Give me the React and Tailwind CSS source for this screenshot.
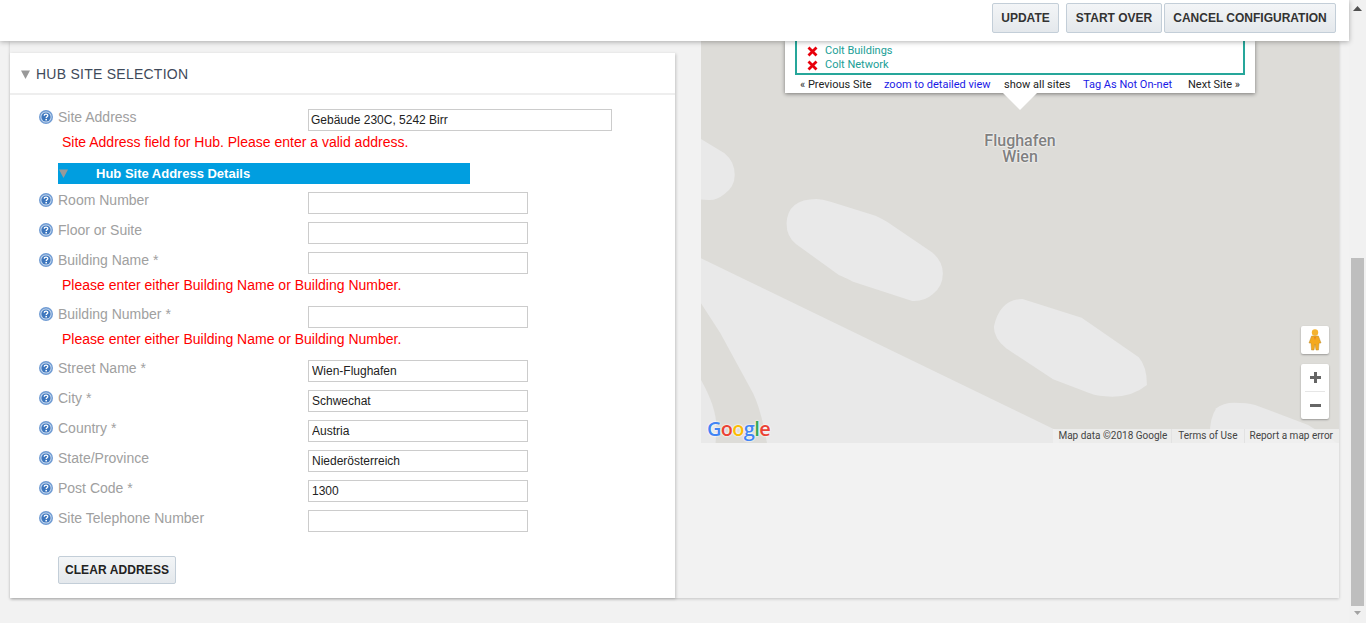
import React from 'react';

const sans = "font-['Liberation_Sans',Arial,sans-serif]";

function HelpIcon() {
  return (
    <svg width="14" height="14" viewBox="0 0 14 14" className="shrink-0">
      <circle cx="7" cy="7" r="7" fill="#6f9bd3" />
      <circle cx="7" cy="7" r="5.6" fill="#c9daef" />
      <circle cx="7" cy="7" r="4.6" fill="#3d76bd" />
      <path d="M5.2 5.7c0-2.2 3.6-2.2 3.6-.1 0 1.3-1.6 1.2-1.6 2.5" fill="none" stroke="#fff" strokeWidth="1.3" />
      <rect x="6.4" y="8.9" width="1.6" height="1.5" fill="#fff" />
    </svg>
  );
}

function Triangle({ className }) {
  return (
    <svg width="9" height="9" viewBox="0 0 9 9" className={className}>
      <path d="M0 0.5H9L4.5 9Z" fill="#999" />
    </svg>
  );
}

function Field({ label, value, error, wide }) {
  return (
    <>
      <div className="flex h-[22px] items-start pl-[29px]">
        <div className="flex w-[269px] items-center gap-[5px] pt-[1px]">
          <HelpIcon />
          <span className="text-[14px] leading-[14px] text-[#a0a0a0]">{label}</span>
        </div>
        <input
          readOnly
          value={value || ''}
          className={`h-[22px] border border-[#ccc] bg-white text-[12px] text-[#222] outline-none ${wide ? 'w-[304px] px-[2px]' : 'w-[220px] px-[3px]'}`}
        />
      </div>
      {error ? (
        <div className="h-[32px] pl-[52px] pt-[3px] text-[14px] leading-[16px] text-[#f00]">{error}</div>
      ) : (
        <div className="h-[8px]" />
      )}
    </>
  );
}

function HubPanel() {
  return (
    <div className="h-[545px] w-[665px] bg-white shadow-[1px_1px_3px_rgba(0,0,0,0.2)]">
      <div className="flex h-[42px] items-center gap-[6px] border-b-2 border-[#eee] pl-[11px] pt-[3px]">
        <Triangle />
        <span className="text-[14px] tracking-[0.25px] text-[#3f4a5a]">HUB SITE SELECTION</span>
      </div>
      <div className="pt-[14px]">
        <Field wide label="Site Address" value="Gebäude 230C, 5242 Birr" error="Site Address field for Hub. Please enter a valid address." />
        <div className="mb-[8px] ml-[48px] flex h-[21px] w-[412px] items-center bg-[#009ee0]">
          <Triangle className="ml-[1px]" />
          <span className="ml-[28px] text-[13px] font-bold text-white">Hub Site Address Details</span>
        </div>
        <Field label="Room Number" />
        <Field label="Floor or Suite" />
        <Field label="Building Name *" error="Please enter either Building Name or Building Number." />
        <Field label="Building Number *" error="Please enter either Building Name or Building Number." />
        <Field label="Street Name *" value="Wien-Flughafen" />
        <Field label="City *" value="Schwechat" />
        <Field label="Country *" value="Austria" />
        <Field label="State/Province" value="Niederösterreich" />
        <Field label="Post Code *" value="1300" />
        <Field label="Site Telephone Number" />
        <button className="ml-[48px] mt-[16px] h-[28px] w-[118px] rounded-[2px] border border-[#c3ced8] bg-gradient-to-b from-[#f3f5f7] to-[#e4e8ec] text-[12px] font-bold tracking-[0.1px] text-[#222]">
          CLEAR ADDRESS
        </button>
      </div>
    </div>
  );
}

function RedX() {
  return (
    <svg width="11" height="11" viewBox="0 0 11 11" className="shrink-0">
      <path d="M1.5 1.5L9.5 9.5M9.5 1.5L1.5 9.5" stroke="#e8000b" strokeWidth="2.8" />
    </svg>
  );
}

function InfoWindow() {
  return (
    <div className="absolute left-[84px] top-0 h-[52px] w-[470px] bg-white font-['Roboto',sans-serif] shadow-[0_1px_4px_rgba(0,0,0,0.45)]">
      <div className="mx-[10px] flex h-[34px] flex-col justify-end border-x-2 border-b-2 border-[#26a69a] pb-[1px] pl-[10px] text-[11px] leading-[14px] text-[#1a9e96]">
        <div className="flex items-center gap-[7px]"><RedX />Colt Buildings</div>
        <div className="flex items-center gap-[7px]"><RedX />Colt Network</div>
      </div>
      <div className="flex items-center pl-[15px] pt-[3px] text-[11px] leading-[14px]">
        <span className="w-[84px] text-[#222]">« Previous Site</span>
        <span className="w-[120px] text-[#1a1ae6]">zoom to detailed view</span>
        <span className="w-[79px] text-[#222]">show all sites</span>
        <span className="w-[105px] text-[#1a1ae6]">Tag As Not On-net</span>
        <span className="text-[#222]">Next Site »</span>
      </div>
      <div className="absolute left-[218px] top-[52px] h-0 w-0 border-x-[17px] border-t-[17px] border-x-transparent border-t-white" />
    </div>
  );
}

function MapShapes() {
  return (
    <svg className="absolute -left-px top-[59px]" width="640" height="345" viewBox="0 0 1568 1035" preserveAspectRatio="none">
      <g fill="#e9e9e9">
        <path d="M0 115L60 160Q85 185 85 225Q85 260 60 282Q40 302 20 300L0 298Z" />
        <path d="M285 297Q300 297 320 305L430 347Q445 355 460 367L570 458Q595 485 595 520Q595 560 570 583Q550 605 520 603L375 545Q350 530 340 525L235 432Q212 410 212 370Q215 297 285 297Z" />
        <path d="M790 597L935 653L1075 772Q1095 800 1095 855Q1060 890 1010 890Q975 890 955 880L865 838L750 745Q720 715 720 680Q735 597 790 597Z" />
        <path d="M1310 908Q1340 908 1360 915L1490 975L1568 1035L1250 1035Q1245 960 1265 925Q1280 908 1310 908Z" />
        <path d="M0 473L880 995L880 1035L165 1035Q150 930 130 880Q90 790 50 700L0 605Z" />
        <path d="M0 835Q40 920 40 980L38 1035L0 1035Z" />
      </g>
    </svg>
  );
}

function Pegman() {
  return (
    <svg width="14" height="22" viewBox="0 0 14 22">
      <circle cx="7" cy="3.5" r="3.2" fill="#f5b32f" />
      <path d="M3.6 7H10.4L13 14H11L10.5 21H8L7 15L6 21H3.5L3 14H1Z" fill="#f5a91d" stroke="#b98a2a" strokeWidth="0.5" />
      <path d="M6.3 8L7 11L7.7 8Z" fill="#e0702a" />
    </svg>
  );
}

function Logo() {
  return (
    <div className="absolute bottom-[2px] left-[6px] font-['Open_Sans',sans-serif] text-[20px] font-semibold leading-[24px] tracking-[-0.7px] [text-shadow:0_0_2px_#fff,0_0_2px_#fff]">
      <span className="text-[#4285f4]">G</span>
      <span className="text-[#ea4335]">o</span>
      <span className="text-[#fbbc05]">o</span>
      <span className="text-[#4285f4]">g</span>
      <span className="text-[#34a853]">l</span>
      <span className="text-[#ea4335]">e</span>
    </div>
  );
}

function MapPanel() {
  return (
    <div className="ml-[26px] w-[638px]">
      <div className="relative h-[402px] overflow-hidden bg-[#dddcd8] font-['Roboto',sans-serif]">
        <MapShapes />
        <InfoWindow />
        <div className="absolute left-[269px] top-[92px] w-[100px] text-center text-[16px] font-medium leading-[16px] text-[#808080] [text-shadow:0_0_2px_#fff,0_0_2px_#fff]">
          Flughafen<br />Wien
        </div>
        <Logo />
        <div className="absolute right-[10px] top-[285px] flex h-[28px] w-[28px] items-center justify-center rounded-[2px] bg-white shadow-[0_1px_2px_rgba(0,0,0,0.3)]">
          <Pegman />
        </div>
        <div className="absolute right-[10px] top-[323px] flex w-[28px] flex-col rounded-[2px] bg-white text-[#666] shadow-[0_1px_2px_rgba(0,0,0,0.3)]">
          <div className="flex h-[27px] items-center justify-center">
            <svg width="11" height="11" viewBox="0 0 11 11"><path d="M4 0H7V4H11V7H7V11H4V7H0V4H4Z" fill="#666" /></svg>
          </div>
          <div className="mx-[4px] h-px bg-[#e6e6e6]" />
          <div className="flex h-[27px] items-center justify-center">
            <svg width="11" height="3" viewBox="0 0 11 3"><rect width="11" height="3" fill="#666" /></svg>
          </div>
        </div>
        <div className="absolute bottom-0 right-0 flex h-[14px] items-center bg-[#f0f0f0]/80 pr-[6px] text-[10px] leading-[14px] text-[#444]">
          <span className="px-[4px] pl-[5px]">Map data ©2018 Google</span>
          <span className="border-l border-[#e2e2e2] px-[6px]">Terms of Use</span>
          <span className="border-l border-[#e2e2e2] pl-[5px]">Report a map error</span>
        </div>
      </div>
    </div>
  );
}

function TopBar() {
  const btn = 'h-[30px] rounded-[2px] border border-[#c3ced8] bg-gradient-to-b from-[#f3f5f7] to-[#e4e8ec] text-[12px] font-bold text-[#333]';
  return (
    <div className="relative z-10 flex h-[41px] items-start justify-end bg-white pr-[13px] pt-[3px] shadow-[0_1px_5px_rgba(0,0,0,0.3)]">
      <button className={`${btn} w-[67px]`}>UPDATE</button>
      <button className={`${btn} ml-[7px] w-[96px]`}>START OVER</button>
      <button className={`${btn} ml-[2px] w-[172px]`}>CANCEL CONFIGURATION</button>
    </div>
  );
}

function ScrollBar() {
  return (
    <div className="flex h-full w-[17px] shrink-0 flex-col items-center bg-[#f1f1f1]">
      <svg width="9" height="5" viewBox="0 0 9 5" className="mt-[6px]"><path d="M0 5L4.5 0L9 5Z" fill="#505050" /></svg>
      <div className="mt-[247px] h-[348px] w-[13px] bg-[#bebebe]" />
      <svg width="7" height="4" viewBox="0 0 7 4" className="mt-[5px]"><path d="M0 0L3.5 4L7 0Z" fill="#a3a3a3" /></svg>
    </div>
  );
}

export default function App() {
  return (
    <div className={`flex h-screen w-full overflow-hidden bg-[#f2f2f2] ${sans}`}>
      <div className="min-w-0 flex-1">
        <TopBar />
        <div className="ml-[10px] flex h-[557px] w-[1329px] shadow-[0_1px_3px_rgba(0,0,0,0.2)]">
          <div className="pt-[12px]">
            <HubPanel />
          </div>
          <MapPanel />
        </div>
      </div>
      <ScrollBar />
    </div>
  );
}
